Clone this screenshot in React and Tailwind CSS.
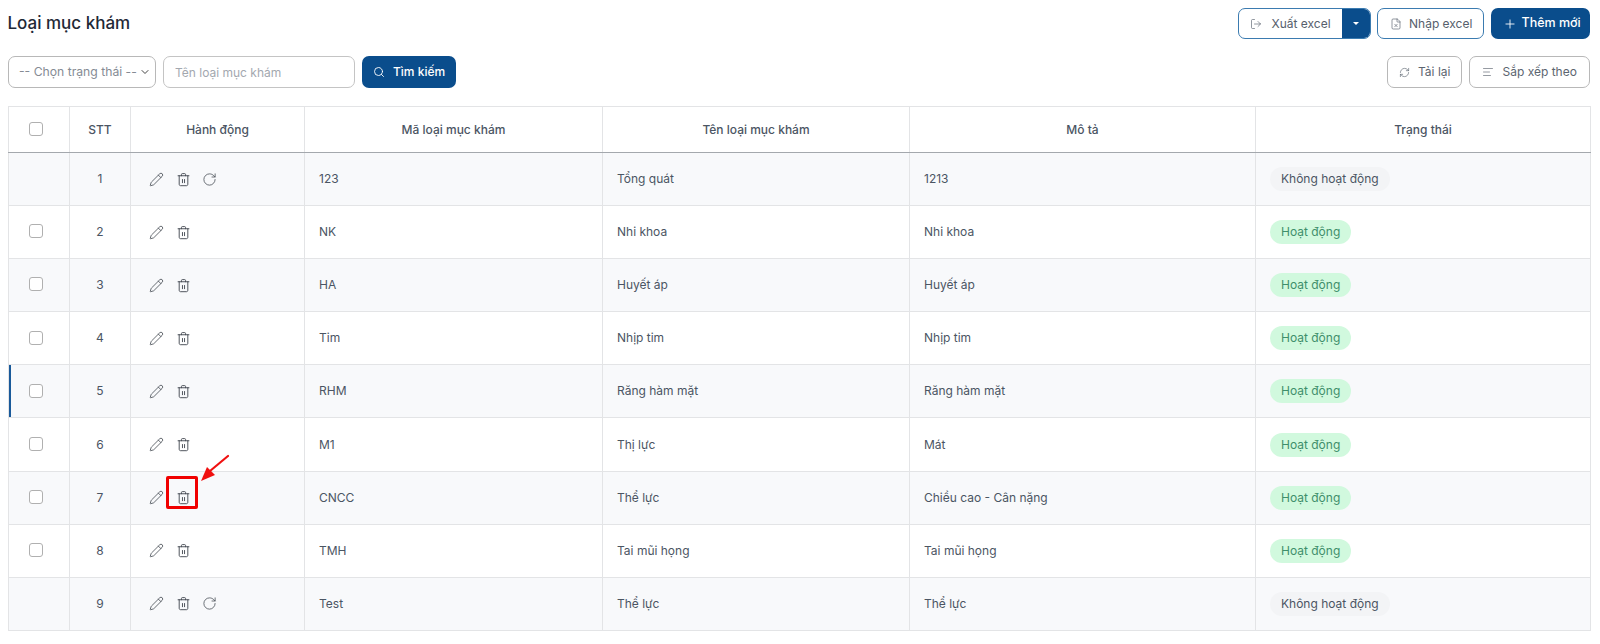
import { AlignLeft, ChevronDown, FileX, LogOut, Pencil, Plus, RefreshCw, RotateCw, Search } from 'lucide-react';

const rows = [
  { stt: 1, code: '123', name: 'Tổng quát', desc: '1213', active: false },
  { stt: 2, code: 'NK', name: 'Nhi khoa', desc: 'Nhi khoa', active: true },
  { stt: 3, code: 'HA', name: 'Huyết áp', desc: 'Huyết áp', active: true },
  { stt: 4, code: 'Tim', name: 'Nhịp tim', desc: 'Nhịp tim', active: true },
  { stt: 5, code: 'RHM', name: 'Răng hàm mặt', desc: 'Răng hàm mặt', active: true },
  { stt: 6, code: 'M1', name: 'Thị lực', desc: 'Mát', active: true },
  { stt: 7, code: 'CNCC', name: 'Thể lực', desc: 'Chiều cao - Cân nặng', active: true },
  { stt: 8, code: 'TMH', name: 'Tai mũi họng', desc: 'Tai mũi họng', active: true },
  { stt: 9, code: 'Test', name: 'Thể lực', desc: 'Thể lực', active: false },
];

const Checkbox = () => (
  <span className="inline-block w-[14px] h-[14px] rounded-[3px] border border-[#b0b0b0] bg-white align-middle" />
);

const TrashIcon = () => (
  <svg width="15" height="15" viewBox="0 0 16 16" fill="none" stroke="currentColor" strokeWidth="1" strokeLinecap="round" strokeLinejoin="round">
    <path d="M2.2 4h11.6" />
    <path d="M5.8 4V2.6c0-.5.4-.9.9-.9h2.6c.5 0 .9.4.9.9V4" />
    <path d="M3.4 4v9.2c0 .8.6 1.4 1.4 1.4h6.4c.8 0 1.4-.6 1.4-1.4V4" />
    <path d="M6.9 8v3.4M9.1 8v3.4" />
  </svg>
);

const Row = ({ row }) => {
  const striped = row.stt % 2 === 1;
  return (
    <tr className={`h-[53.1px] ${striped ? 'bg-[#f8f9fb]' : 'bg-white'}`}>
      <td className={`border border-[#e3e4e6] text-center pr-[7px] pb-[3px] ${row.stt === 5 ? 'shadow-[inset_2px_0_0_#1a5a9a]' : ''}`}>
        {row.active && <Checkbox />}
      </td>
      <td className="border border-[#e3e4e6] text-center">{row.stt}</td>
      <td className="border border-[#e3e4e6] pl-[18px]">
        <div className="flex items-center gap-[12px] text-[#454b53]">
          <Pencil size={15} strokeWidth={1.3} />
          <TrashIcon />
          {!row.active && <RotateCw size={15} strokeWidth={1.25} className="-ml-[1px]" />}
        </div>
      </td>
      <td className="border border-[#e3e4e6] pl-[14px]">{row.code}</td>
      <td className="border border-[#e3e4e6] pl-[14px]">{row.name}</td>
      <td className="border border-[#e3e4e6] pl-[14px]">{row.desc}</td>
      <td className="border border-[#e3e4e6] pl-[14px]">
        {row.active ? (
          <span className="inline-block h-[24px] leading-[24px] px-[11px] rounded-full bg-[#d1f9de] text-[#3f8f6b]">Hoạt động</span>
        ) : (
          <span className="inline-block h-[24px] leading-[24px] px-[11px] rounded-full bg-[#f3f4f6] text-[#4b5563]">Không hoạt động</span>
        )}
      </td>
    </tr>
  );
};

export default function App() {
  return (
    <div className="relative w-[1600px] h-[644px] bg-white font-['Inter',sans-serif] text-[12px] text-[#4b5563] overflow-hidden">
      <div className="flex items-center justify-between pl-[7.5px] pr-[10.5px] pt-[8px]">
        <h1 className="text-[17px] leading-[31px] font-medium text-[#1f2937]">Loại mục khám</h1>
        <div className="flex items-center gap-[6.5px]">
          <div className="flex h-[31px] w-[133px] rounded-[7px] border border-[#3b7bb0] overflow-hidden">
            <button className="flex-1 flex items-center gap-[10px] pl-[11px] text-[#56606c]">
              <LogOut size={12} strokeWidth={1.3} />
              Xuất excel
            </button>
            <span className="w-[28px] bg-[#0a4d8c] flex items-center justify-center">
              <span className="border-x-[3px] border-x-transparent border-t-[3px] border-t-white" />
            </span>
          </div>
          <button className="flex items-center gap-[7px] h-[31px] w-[107px] pl-[12px] rounded-[7px] border border-[#3b7bb0] text-[#56606c]">
            <FileX size={12} strokeWidth={1.3} />
            Nhập excel
          </button>
          <button className="flex items-center gap-[5px] h-[31px] w-[99px] pl-[12px] rounded-[7px] bg-[#0a4d8c] text-white text-[12.5px] font-medium">
            <Plus size={14} strokeWidth={1.5} />
            Thêm mới
          </button>
        </div>
      </div>

      <div className="flex items-center justify-between pl-[8px] pr-[10.5px] mt-[17px]">
        <div className="flex items-center gap-[7px]">
          <div className="flex items-center justify-between h-[32px] w-[148px] pl-[10px] pr-[4px] rounded-[7px] border border-[#b8b8b8] text-[12.2px] text-[#858b94] whitespace-nowrap">
            -- Chọn trạng thái --
            <ChevronDown size={12} strokeWidth={2} className="text-[#444]" />
          </div>
          <input
            placeholder="Tên loại mục khám"
            className="h-[32px] w-[192px] px-[11px] rounded-[7px] border border-[#c4c4c4] outline-none placeholder:text-[#a3a8af]"
          />
          <button className="flex items-center gap-[8px] h-[32px] w-[94px] pl-[11px] rounded-[7px] bg-[#0a4d8c] text-white font-medium">
            <Search size={12} strokeWidth={1.8} />
            Tìm kiếm
          </button>
        </div>
        <div className="flex items-center gap-[6.5px]">
          <button className="flex items-center gap-[8px] h-[32px] w-[75px] pl-[11px] rounded-[7px] border border-[#b8b8b8] text-[#5c6570]">
            <RefreshCw size={11} strokeWidth={1.4} />
            Tải lại
          </button>
          <button className="flex items-center gap-[9px] h-[32px] w-[121px] pl-[12px] rounded-[7px] border border-[#b8b8b8] text-[#5c6570]">
            <AlignLeft size={12} strokeWidth={1.3} />
            Sắp xếp theo
          </button>
        </div>
      </div>

      <div className="mt-[18px] ml-[8px] w-[1583px]">
        <table className="w-full table-fixed border-collapse">
          <colgroup>
            <col className="w-[61px]" />
            <col className="w-[61px]" />
            <col className="w-[174px]" />
            <col className="w-[298px]" />
            <col className="w-[307px]" />
            <col className="w-[346px]" />
            <col />
          </colgroup>
          <thead>
            <tr className="h-[46px] text-[#4b5563]">
              <th className="border border-[#e3e4e6] border-b-[#a4a8ad] font-medium pr-[7px] pb-[3px]"><Checkbox /></th>
              <th className="border border-[#e3e4e6] border-b-[#a4a8ad] font-medium">STT</th>
              <th className="border border-[#e3e4e6] border-b-[#a4a8ad] font-medium">Hành động</th>
              <th className="border border-[#e3e4e6] border-b-[#a4a8ad] font-medium">Mã loại mục khám</th>
              <th className="border border-[#e3e4e6] border-b-[#a4a8ad] font-medium">Tên loại mục khám</th>
              <th className="border border-[#e3e4e6] border-b-[#a4a8ad] font-medium">Mô tả</th>
              <th className="border border-[#e3e4e6] border-b-[#a4a8ad] font-medium">Trạng thái</th>
            </tr>
          </thead>
          <tbody>
            {rows.map((row) => <Row key={row.stt} row={row} />)}
          </tbody>
        </table>
      </div>

      {/* annotation over the delete icon of row 7 */}
      <div className="absolute left-[166px] top-[476px] w-[32px] h-[33px] border-[3px] border-[#f00000] rounded-[2px]" />
      <svg className="absolute left-[198px] top-[450px]" width="36" height="36" viewBox="0 0 36 36" fill="none">
        <path d="M30 6 L12 21" stroke="#f01010" strokeWidth="2.2" strokeLinecap="round" />
        <path d="M3 31 L9 17 L17 25 Z" fill="#f01010" />
      </svg>
    </div>
  );
}
